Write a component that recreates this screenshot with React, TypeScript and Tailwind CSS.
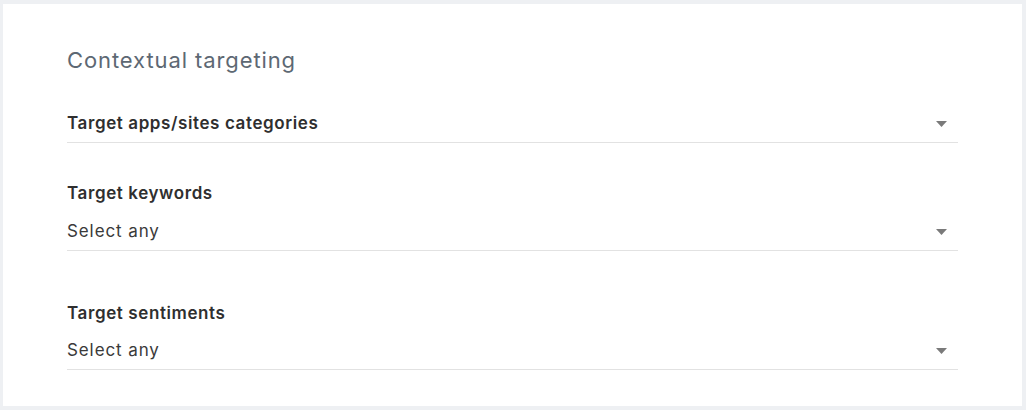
import { ReactNode } from 'react'

function Caret() {
  return (
    <svg width="11" height="6" viewBox="0 0 11 6" className="shrink-0">
      <path d="M0 0h11L5.5 6z" fill="#7a7a7a" />
    </svg>
  )
}

function SelectRow({ children }: { children: ReactNode }) {
  return (
    <div className="flex items-center justify-between pr-[11px] h-[38px] border-b border-[#e2e2e2]">
      {children}
      <Caret />
    </div>
  )
}

export default function App() {
  return (
    <div className="w-[1026px] h-[410px] bg-[#eef0f3] pt-[4px] pl-[3px] pr-[4px] pb-[4px]" style={{ fontFamily: 'Inter, "Noto Sans", sans-serif' }}>
      <div className="h-full bg-white pl-[64px] pr-[64px] pt-[41px]">
        <h2 className="text-[22px] leading-[30px] text-[#5d6873] tracking-[0.9px]">Contextual targeting</h2>

        <div className="mt-[30px]">
          <SelectRow>
            <span className="text-[17px] font-semibold text-[#2f2f2f] tracking-[0.6px]">Target apps/sites categories</span>
          </SelectRow>
        </div>

        <div className="mt-[38px]">
          <div className="text-[17px] font-semibold text-[#2f2f2f] tracking-[0.6px] leading-[24px] mb-[8px]">Target keywords</div>
          <SelectRow>
            <span className="text-[17px] text-[#3a3a3a] tracking-[0.9px]">Select any</span>
          </SelectRow>
        </div>

        <div className="mt-[50px]">
          <div className="text-[17px] font-semibold text-[#2f2f2f] tracking-[0.6px] leading-[24px] mb-[7px]">Target sentiments</div>
          <SelectRow>
            <span className="text-[17px] text-[#3a3a3a] tracking-[0.9px]">Select any</span>
          </SelectRow>
        </div>
      </div>
    </div>
  )
}
